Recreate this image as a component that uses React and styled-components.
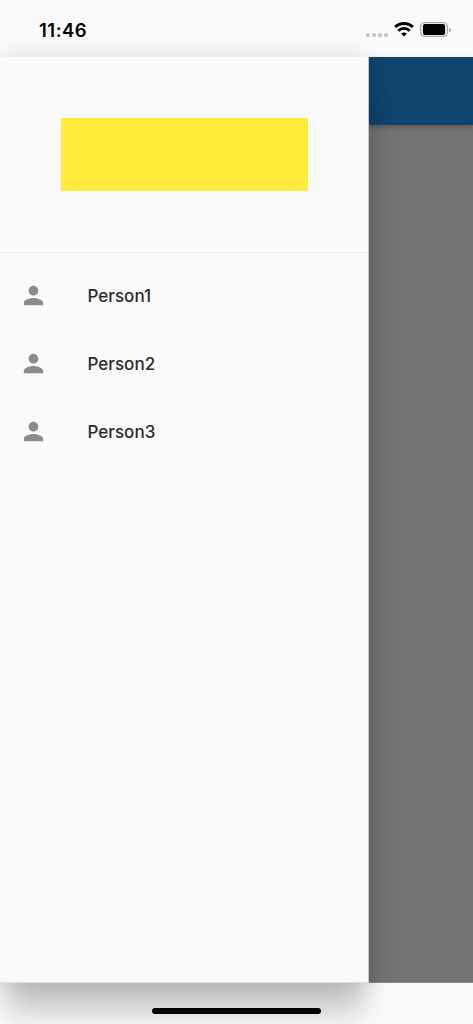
import React from 'react'
import styled, { createGlobalStyle } from 'styled-components'
import { MdPerson } from 'react-icons/md'


const people = ['Person1', 'Person2', 'Person3']

export default function App() {
  return (
    <>
        <GlobalStyle />
        <Screen>
            <StatusBar>
                <Clock>11:46</Clock>
                <StatusIcons>
                    <Dots>
                        <Dot /><Dot /><Dot /><Dot />
                    </Dots>
                    <Wifi viewBox="0 0 20 15">
                        <path d="M1.1 5.1a12.8 12.8 0 0 1 17.8 0" />
                        <path d="M4.3 8.7a8.2 8.2 0 0 1 11.4 0" />
                        <path d="M7.6 11.8a3.8 3.8 0 0 1 4.8 0L10 14z" fill="#000" strokeWidth="0.9" />
                    </Wifi>
                    <Battery>
                        <BatteryBody><Charge /></BatteryBody>
                        <BatteryTip />
                    </Battery>
                </StatusIcons>
            </StatusBar>
            <Body>
                <Drawer>
                    <DrawerHeader>
                        <Banner />
                    </DrawerHeader>
                    <List>
                        {people.map((name) => (
                            <Item key={name}>
                                <PersonIcon />
                                <Name>{name}</Name>
                            </Item>
                        ))}
                    </List>
                </Drawer>
                <Page>
                    <AppBar />
                </Page>
            </Body>
            <BottomArea>
                <HomeIndicator />
            </BottomArea>
        </Screen>
    </>
  )
}


const GlobalStyle = createGlobalStyle`
    * {
        box-sizing: border-box;
    }
    body {
        margin: 0;
        background: #fafafa;
    }
`;

const Screen = styled.div`
    display: flex;
    flex-direction: column;
    width: 473px;
    height: 1024px;
    overflow: hidden;
    background: #fafafa;
    font-family: Inter, 'Liberation Sans', sans-serif;
`;

const StatusBar = styled.div`
    display: flex;
    justify-content: space-between;
    height: 57px;
    flex: none;
    padding: 0 22px 0 39px;
`;

const Clock = styled.div`
    margin-top: 18px;
    font-size: 18.5px;
    line-height: 24px;
    font-weight: 600;
    letter-spacing: 0.5px;
    color: #000;
`;

const StatusIcons = styled.div`
    display: flex;
    align-items: flex-start;
    padding-top: 22px;
`;

const Dots = styled.div`
    display: flex;
    gap: 2px;
    margin: 11px 6px 0 0;
`;

const Dot = styled.div`
    width: 4px;
    height: 4px;
    border-radius: 1.5px;
    background: #c8c8c8;
`;

const Wifi = styled.svg`
    width: 20px;
    height: 15px;
    margin-right: 6px;
    fill: none;
    stroke: #000;
    stroke-width: 2.8;
`;

const Battery = styled.div`
    display: flex;
    align-items: center;
    gap: 1px;
`;

const BatteryBody = styled.div`
    width: 28px;
    height: 15px;
    padding: 1px;
    border: 1px solid #a8a8a8;
    border-radius: 4px;
    background: #e2e2e2;
`;

const Charge = styled.div`
    height: 11px;
    margin: 0 1px;
    border-radius: 2px;
    background: #000;
`;

const BatteryTip = styled.div`
    width: 2px;
    height: 4px;
    border-radius: 0 2px 2px 0;
    background: #a5a5a5;
`;

const Body = styled.div`
    display: flex;
    height: 926px;
    flex: none;
`;

const Drawer = styled.div`
    position: relative;
    z-index: 1;
    width: 369px;
    flex: none;
    border-right: 1px solid #c6c6c6;
    border-bottom: 1px solid #dedede;
    background: #fafafa;
    box-shadow: 0 34px 28px -6px rgba(0, 0, 0, 0.22),
        0 0 20px rgba(0, 0, 0, 0.12);
`;

const DrawerHeader = styled.div`
    height: 196px;
    padding: 61px 60px 61px 61px;
    border-bottom: 1px solid #ebebeb;
`;

const Banner = styled.div`
    height: 73px;
    background: #ffeb3b;
`;

const List = styled.div`
    padding-top: 9px;
`;

const Item = styled.div`
    display: flex;
    align-items: center;
    gap: 39px;
    height: 68px;
    padding-left: 19.4px;
`;

const PersonIcon = styled(MdPerson)`
    width: 29px;
    height: 29px;
    margin-bottom: 1px;
    color: #8b8b8b;
`;

const Name = styled.div`
    font-size: 17px;
    font-weight: 500;
    letter-spacing: 0.05px;
    color: #2a2a2a;
`;

const Page = styled.div`
    flex: 1;
    border-bottom: 1px solid #8c8c8c;
    background: #737373;
`;

const AppBar = styled.div`
    height: 68px;
    background: #0f446e;
    box-shadow: 0 2px 5px rgba(0, 0, 0, 0.25);
`;

const BottomArea = styled.div`
    position: relative;
    z-index: 2;
    display: flex;
    justify-content: center;
    align-items: flex-start;
    flex: 1;
    padding-top: 25px;
`;

const HomeIndicator = styled.div`
    width: 169px;
    height: 6px;
    border-radius: 3px;
    background: #000;
`;
